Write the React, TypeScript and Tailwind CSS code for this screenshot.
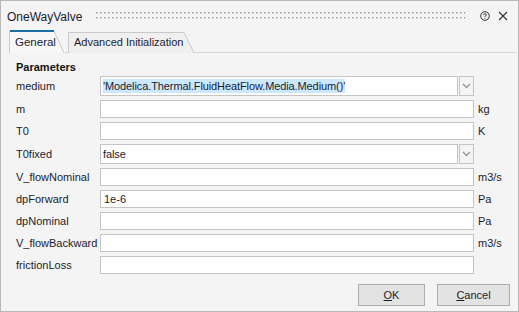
import React from "react";

const font = { fontFamily: '"Liberation Sans", Arial, sans-serif' };

type Row = { label: string; value?: string; unit?: string; combo?: boolean; selected?: boolean };

const ROWS: Row[] = [
  { label: "medium", value: "'Modelica.Thermal.FluidHeatFlow.Media.Medium()'", combo: true, selected: true },
  { label: "m", unit: "kg" },
  { label: "T0", unit: "K" },
  { label: "T0fixed", value: "false", combo: true },
  { label: "V_flowNominal", unit: "m3/s" },
  { label: "dpForward", value: "1e-6", unit: "Pa" },
  { label: "dpNominal", unit: "Pa" },
  { label: "V_flowBackward", unit: "m3/s" },
  { label: "frictionLoss" },
];

const Chevron = () => (
  <svg width="9" height="6" viewBox="0 0 9 6">
    <path d="M1 1 L4.5 4.5 L8 1" fill="none" stroke="#9a9a9a" strokeWidth="1.4" />
  </svg>
);

const Grip = () => (
  <svg className="flex-1 h-[8px]" preserveAspectRatio="none">
    <defs>
      <pattern id="dots" width="4" height="5" patternUnits="userSpaceOnUse">
        <rect x="0" y="0" width="1.5" height="1.5" fill="#a0a0a0" />
      </pattern>
    </defs>
    <rect width="100%" height="7" fill="url(#dots)" />
  </svg>
);

const Field = ({ row }: { row: Row }) => {
  if (row.combo) {
    return (
      <div className="flex h-[20px] gap-[1px]">
        <div className="flex-1 bg-white border border-[#c4c4c4] flex items-center px-[2px] overflow-hidden">
          <span className={`whitespace-nowrap leading-[14px] tracking-[-0.1px] ${row.selected ? "bg-[#cce8ff]" : ""}`}>{row.value}</span>
        </div>
        <div className="w-[15px] border border-[#c4c4c4] bg-[#f4f4f4] flex items-center justify-center">
          <Chevron />
        </div>
      </div>
    );
  }
  return (
    <div className="h-[18px] bg-white border border-[#c4c4c4] flex items-center px-[3px]">
      <span className="whitespace-nowrap">{row.value}</span>
    </div>
  );
};

export default function App() {
  return (
    <div style={font} className="w-[519px] h-[312px] bg-[#f4f4f4] border border-[#b9b9b9] flex flex-col text-[11px] text-[#1c1c2c] overflow-hidden">
      {/* title bar */}
      <div className="h-[29px] flex items-center pl-[6px] pr-[10px] gap-[14px]">
        <span className="text-[12px] text-[#1b1b2b] pt-[2px]">OneWayValve</span>
        <Grip />
        <div className="flex items-center gap-[8px] pt-[1px]">
          <svg width="10" height="10" viewBox="0 0 10 10">
            <circle cx="5" cy="5" r="4.3" fill="none" stroke="#333" strokeWidth="1" />
            <path d="M3.6 4 Q3.6 2.7 5 2.7 Q6.4 2.7 6.4 3.9 Q6.4 4.8 5 5.2 L5 6" fill="none" stroke="#333" strokeWidth="0.9" />
            <rect x="4.55" y="6.9" width="0.9" height="0.9" fill="#333" />
          </svg>
          <svg width="10" height="10" viewBox="0 0 10 10">
            <path d="M1 1 L9 9 M9 1 L1 9" stroke="#333" strokeWidth="1.1" />
          </svg>
        </div>
      </div>

      {/* tabs */}
      <div className="h-[23px] flex items-end pl-[8px]">
        <div className="relative w-[56px] h-[23px] flex items-center pl-[6px] pt-[2px] text-[11.5px]">
          <svg className="absolute inset-0" width="56" height="23">
            <path d="M0.5 23 L0.5 1 L45 1 L55 23" fill="#f7f7f7" stroke="#c9c9c9" />
            <rect x="1" y="0" width="44" height="2" fill="#1a6fa3" />
          </svg>
          <span className="relative">General</span>
        </div>
        <div className="relative w-[130px] h-[21px] flex items-center pl-[9px] text-[11px] border-b border-[#d6d6d6]">
          <svg className="absolute inset-0" width="130" height="21">
            <path d="M3.5 21 L3.5 0.5 L119 0.5 L129 21" fill="#f0f0f0" stroke="#c9c9c9" />
          </svg>
          <span className="relative">Advanced Initialization</span>
        </div>
        <div className="flex-1 border-b border-[#d6d6d6] mr-[2px]" />
      </div>

      {/* content */}
      <div className="flex-1 pl-[15px] pr-[15px] pt-[8px] flex flex-col">
        <div className="font-bold text-[11px] leading-[13px] text-[#111]">Parameters</div>
        <div className="mt-[2px] grid grid-cols-[84px_374px_1fr] gap-y-[4px] items-center">
          {ROWS.map(r => (
            <React.Fragment key={r.label}>
              <div className="whitespace-nowrap">{r.label}</div>
              <Field row={r} />
              <div className="pl-[4px] whitespace-nowrap">{r.unit ?? ""}</div>
            </React.Fragment>
          ))}
        </div>
        <div className="mt-auto mb-[5px] flex justify-end gap-[12px]">
          <button className="w-[67px] h-[22px] bg-[#e3e3e3] border border-[#adadad] text-[11px]">
            <span className="underline underline-offset-[1px]">O</span>K
          </button>
          <button className="w-[73px] h-[22px] bg-[#e3e3e3] border border-[#adadad] text-[11px] -mr-[7px]">
            <span className="underline underline-offset-[1px]">C</span>ancel
          </button>
        </div>
      </div>
    </div>
  );
}
